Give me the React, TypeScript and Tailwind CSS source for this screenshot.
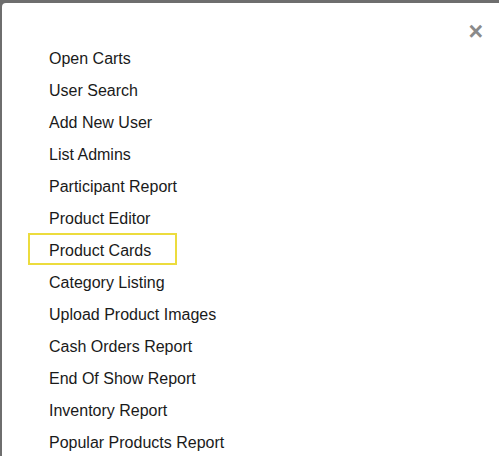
const items = [
  'Open Carts',
  'User Search',
  'Add New User',
  'List Admins',
  'Participant Report',
  'Product Editor',
  'Product Cards',
  'Category Listing',
  'Upload Product Images',
  'Cash Orders Report',
  'End Of Show Report',
  'Inventory Report',
  'Popular Products Report',
]

export default function App() {
  return (
    <div
      className="w-[499px] h-[456px] overflow-hidden bg-[#6e6e6e] pt-[3px] pl-[2px]"
      style={{ fontFamily: '"Liberation Sans", Arial, sans-serif' }}
    >
      <div className="relative w-[510px] h-[470px] bg-white rounded-tl-[4px]">
        <button className="absolute right-[29px] top-[16px] text-[25px] font-bold leading-none text-[#8a8a8a]">
          ×
        </button>
        <ul className="pt-[38px] pl-[26px] flex flex-col items-start">
          {items.map((item) => (
            <li
              key={item}
              className={`h-[32px] pt-[7px] pl-[19px] pr-[24px] text-[16px] leading-[18px] text-[#1a1a1a] border-2 ${
                item === 'Product Cards' ? 'border-[#ecdc3e]' : 'border-transparent'
              }`}
            >
              {item}
            </li>
          ))}
        </ul>
      </div>
    </div>
  )
}
